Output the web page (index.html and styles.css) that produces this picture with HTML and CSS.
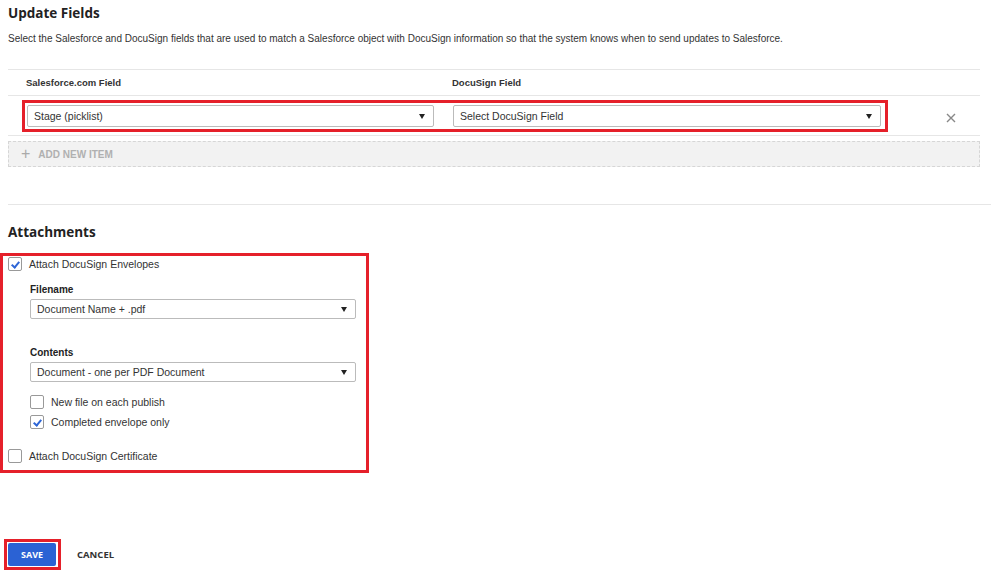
FILE: index.html
```html
<!DOCTYPE html>
<html lang="en">
<head>
  <meta charset="UTF-8">
  <title>Update Fields</title>
  <link rel="stylesheet" href="styles.css">
</head>
<body>

  <div class="page">
    <h2 class="section-title">Update Fields</h2>
    <p class="desc">Select the Salesforce and DocuSign fields that are used to match a Salesforce object with DocuSign information so that the system knows when to send updates to Salesforce.</p>

    <div class="map-table">
      <div class="map-head">
        <div class="col-sf">Salesforce.com Field</div>
        <div class="col-ds">DocuSign Field</div>
      </div>
      <div class="map-row">
        <div class="highlight pair">
          <div class="select select-sf">Stage (picklist)<span class="caret"></span></div>
          <div class="select select-ds">Select DocuSign Field<span class="caret"></span></div>
        </div>
        <button type="button" class="remove">
          <svg width="10" height="10" viewBox="0 0 10 10"><path d="M1 1L9 9M9 1L1 9" stroke="#888" stroke-width="1.4"/></svg>
        </button>
      </div>
      <div class="add-item"><span class="plus">+</span>ADD NEW ITEM</div>
    </div>
  </div>

  <hr class="divider">

  <div class="page">
    <h2 class="section-title attach-title">Attachments</h2>
  </div>

  <div class="highlight attach-box">
    <label class="check"><span class="box checked"></span>Attach DocuSign Envelopes</label>

    <div class="sub">
      <div class="field-label">Filename</div>
      <div class="select select-small">Document Name + .pdf<span class="caret"></span></div>

      <div class="field-label contents">Contents</div>
      <div class="select select-small">Document - one per PDF Document<span class="caret"></span></div>

      <label class="check sub-check"><span class="box"></span>New file on each publish</label>
      <label class="check sub-check"><span class="box checked"></span>Completed envelope only</label>
    </div>

    <label class="check cert"><span class="box"></span>Attach DocuSign Certificate</label>
  </div>

  <div class="actions">
    <div class="highlight save-wrap"><button type="button" class="save">SAVE</button></div>
    <button type="button" class="cancel">CANCEL</button>
  </div>

</body>
</html>
```

FILE: styles.css
```css
body {
  margin: 0;
  font-family: "Liberation Sans", Arial, sans-serif;
  color: #333;
  background: #fff;
}
.page {
  padding-left: 8px;
}
.section-title {
  margin: 0;
  padding-top: 4px;
  font-family: "Open Sans", sans-serif;
  font-size: 13.5px;
  font-weight: 700;
  line-height: 18px;
  color: #222;
}
.desc {
  margin: 10px 0 0;
  font-size: 10px;
  line-height: 14px;
}
.highlight {
  border: 3px solid #e5202a;
}

/* field mapping table */
.map-table {
  width: 972px;
  margin-top: 23px;
  border-top: 1px solid #e6e6e6;
}
.map-head {
  display: flex;
  height: 25px;
  align-items: center;
  font-size: 9.5px;
  font-weight: 700;
  border-bottom: 1px solid #e6e6e6;
}
.col-sf {
  padding-left: 18px;
  width: 426px;
}
.map-row {
  display: flex;
  align-items: center;
  padding: 4px 0 3px 14px;
  border-bottom: 1px solid #e6e6e6;
}
.pair {
  display: flex;
  gap: 19px;
  padding: 2px 4px 2px 2px;
}
.select {
  position: relative;
  box-sizing: border-box;
  height: 22px;
  line-height: 20px;
  padding-left: 6px;
  font-size: 10.5px;
  color: #333;
  border: 1px solid #bbb;
  border-radius: 2px;
  background: #fff;
}
.select-sf { width: 407px; }
.select-ds { width: 428px; }
.caret {
  position: absolute;
  right: 8px;
  top: 8px;
  border-left: 3.5px solid transparent;
  border-right: 3.5px solid transparent;
  border-top: 5px solid #222;
}
.remove {
  margin-left: 58px;
  padding: 0;
  border: none;
  background: none;
  height: 10px;
}
.add-item {
  box-sizing: border-box;
  height: 26px;
  margin-top: 5px;
  padding-left: 12px;
  display: flex;
  align-items: center;
  font-size: 10px;
  font-weight: 700;
  color: #b0b0b0;
  background: #f2f2f2;
  border: 1px dashed #d6d6d6;
}
.plus {
  font-size: 16px;
  font-weight: 400;
  margin-right: 8px;
  color: #aaa;
}
.divider {
  margin: 37px 0 0 8px;
  border: none;
  border-top: 1px solid #e6e6e6;
}
.attach-title {
  padding-top: 18px;
}

/* attachments */
.attach-box {
  box-sizing: border-box;
  width: 369px;
  margin-top: 12px;
  padding: 0 0 6px 5px;
}
.check {
  display: flex;
  align-items: center;
  font-size: 10.5px;
  height: 16px;
}
.box {
  box-sizing: border-box;
  width: 14px;
  height: 14px;
  margin-right: 7px;
  border: 1px solid #999;
  border-radius: 2px;
  background: #fff;
  position: relative;
}
.box.checked::after {
  content: '';
  position: absolute;
  left: 3.5px;
  top: 1.5px;
  width: 3px;
  height: 6px;
  border-right: 2px solid #2e66d6;
  border-bottom: 2px solid #2e66d6;
  transform: rotate(40deg);
}
.sub {
  padding-left: 22px;
}
.field-label {
  margin-top: 12px;
  font-size: 10px;
  font-weight: 700;
  color: #222;
}
.field-label.contents {
  margin-top: 28px;
}
.select-small {
  width: 326px;
  height: 20px;
  line-height: 18px;
  margin-top: 4px;
}
.select-small .caret {
  top: 7px;
}
.sub-check {
  margin-top: 4px;
}
.sub-check:first-of-type {
  margin-top: 12px;
}
.cert {
  margin-top: 18px;
}

/* buttons */
.actions {
  display: flex;
  align-items: center;
  margin-top: 66px;
  padding-left: 4px;
}
.save-wrap {
  padding: 1px 2px 1px 1px;
}
.save {
  width: 48px;
  height: 23px;
  border: none;
  border-radius: 2px;
  background: #2b62d4;
  color: #fff;
  font-family: "Open Sans", sans-serif;
  font-size: 9px;
  font-weight: 700;
  cursor: pointer;
}
.cancel {
  margin-left: 10px;
  border: none;
  background: none;
  font-family: "Open Sans", sans-serif;
  font-size: 9.5px;
  font-weight: 700;
  color: #333;
  cursor: pointer;
}
```
